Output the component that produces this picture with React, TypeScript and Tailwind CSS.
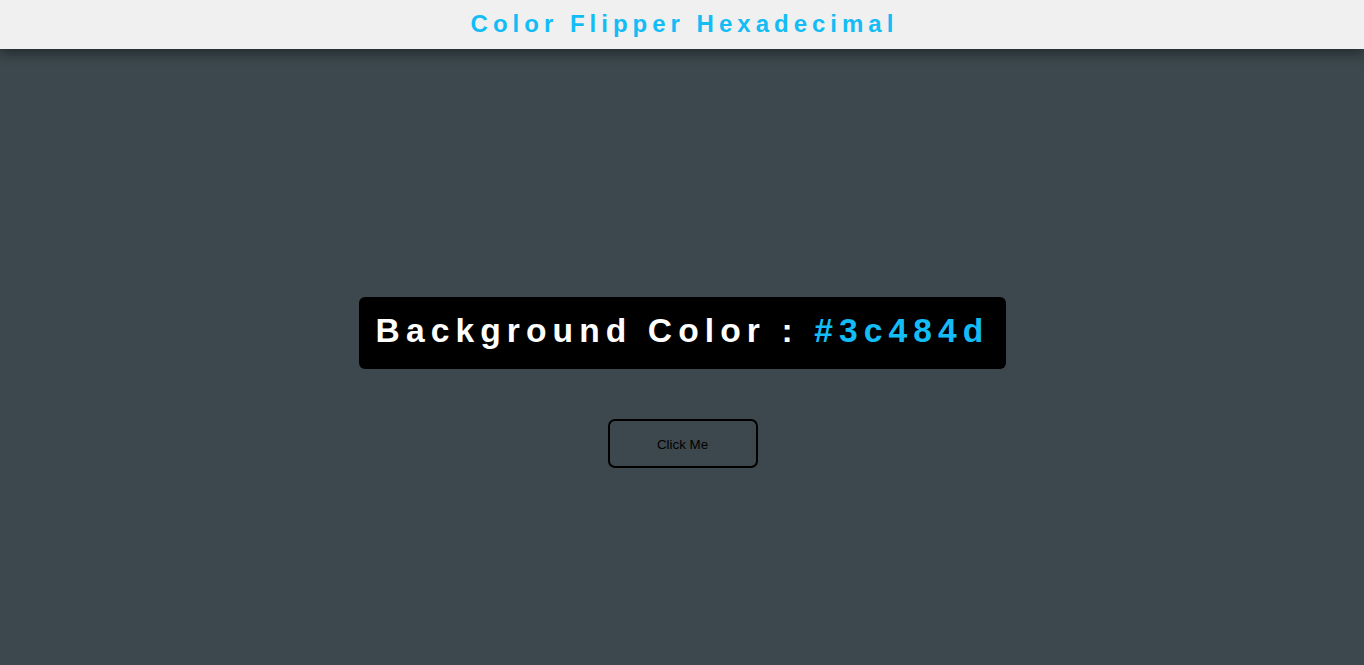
import React, { useState } from 'react';

const App: React.FC = () => {
  const [color] = useState('#3c484d');

  return (
    <div
      className="min-h-screen flex flex-col bg-[#3c484d]"
      style={{ fontFamily: '"Liberation Sans", Arial, sans-serif' }}
    >
      {/* Header */}
      <header className="relative z-10 h-[49px] bg-[#f0f0f0] flex items-center justify-center pb-[2px] shadow-[0_4px_12px_rgba(0,0,0,0.45)]">
        <h1 className="text-[24px] font-bold tracking-[5px] text-[#14bcf5] leading-none pl-[5px]">
          Color Flipper Hexadecimal
        </h1>
      </header>

      {/* Main */}
      <main className="flex-1 flex flex-col items-center pt-[248px] pl-[1px]">
        <h2 className="bg-black rounded-[6px] pl-[17px] pr-[17px] pt-[15px] pb-[18px] text-[33.6px] font-bold tracking-[6.1px] leading-[38.6px] text-white whitespace-nowrap">
          Background Color : <span className="text-[#14bcf5]">{color}</span>
        </h2>
        <button className="mt-[50px] w-[150px] h-[49px] pt-[3px] border-2 border-black rounded-[7px] bg-transparent text-[13.33px] text-black cursor-pointer">
          Click Me
        </button>
      </main>
    </div>
  );
};

export default App;
